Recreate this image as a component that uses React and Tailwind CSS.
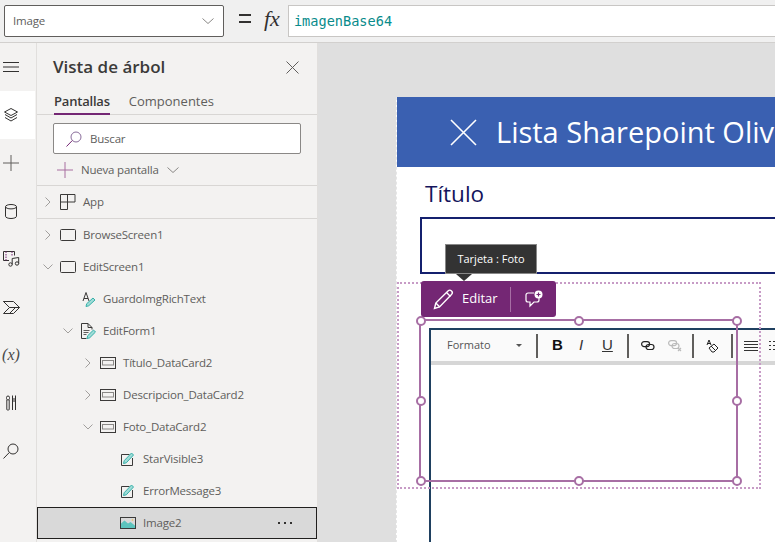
import { useState } from "react";

const ink = "#3b3a39";
const teal = "#35b0a9";

function Chevron({ open }) {
  return (
    <svg width="12" height="12" viewBox="0 0 12 12" fill="none" stroke="#a19f9d" strokeWidth="1">
      {open ? <path d="M1.5 3.5 6 8l4.5-4.5" /> : <path d="M3.5 1.5 8 6l-4.5 4.5" />}
    </svg>
  );
}

function GridIcon() {
  return (
    <svg width="16" height="16" viewBox="0 0 16 16" fill="none" stroke={ink}>
      <path d="M.5.500h14.500v7.500H.5zM7.500.500V15.500M.5 8v7.500h7" />
    </svg>
  );
}

function ScreenIcon() {
  return (
    <svg width="16" height="12" viewBox="0 0 16 12" fill="none" stroke={ink}>
      <rect x=".5" y=".5" width="15" height="11" rx="1" />
    </svg>
  );
}

function CardIcon() {
  return (
    <svg width="16" height="12" viewBox="0 0 16 12" fill="none">
      <rect x=".5" y=".5" width="15" height="11" stroke={ink} />
      <rect x="2.500" y="3.500" width="11" height="4.500" stroke="#8a8886" />
    </svg>
  );
}

function Pencil({ d }) {
  return <path d={d} fill="#9fdcd7" stroke={teal} strokeWidth="1" strokeLinejoin="round" />;
}

function RichTextIcon() {
  return (
    <svg width="16" height="16" viewBox="0 0 16 16" fill="none">
      <path d="M3 10 6 1.500 9 10M4 7.500h4" stroke={ink} />
      <Pencil d="m6 15.500.7-2.800L13 7l2 2-6.300 5.800z" />
    </svg>
  );
}

function FormIcon() {
  return (
    <svg width="16" height="16" viewBox="0 0 16 16" fill="none">
      <path d="M8 .5H1.500v15h5M8 .5l4 4v2M8 .5v4h4" stroke={ink} />
      <path d="M3.500 7.500h6M3.500 9.500h5M3.500 11.500h3" stroke="#605e5c" />
      <Pencil d="m7 15.500.7-2.800L13.500 7l2 2-5.800 5.800z" />
    </svg>
  );
}

function EditBoxIcon() {
  return (
    <svg width="14" height="14" viewBox="0 0 14 14" fill="none">
      <path d="M8.500 2.500H.5v11h11V6" stroke={ink} />
      <Pencil d="m2.500 11.500.7-2.800L10.500 1l2 2L5.300 10.800z" />
    </svg>
  );
}

function PictureIcon() {
  return (
    <svg width="16" height="12" viewBox="0 0 16 12" fill="none">
      <path d="M.500 11.500V7l4-3.500L8 6.500l2.500-1.500 5 4v2.500z" fill="#5cc4bd" />
      <rect x=".5" y=".5" width="15" height="11" stroke={ink} />
      <circle cx="12.500" cy="3" r=".8" fill="#f2c14e" />
    </svg>
  );
}

const rows = [
  { id: "BrowseScreen1", pad: "pl-[5px]", chevron: "closed", icon: <ScreenIcon /> },
  { id: "EditScreen1", pad: "pl-[5px]", chevron: "open", icon: <ScreenIcon /> },
  { id: "GuardoImgRichText", pad: "pl-[25px]", icon: <RichTextIcon /> },
  { id: "EditForm1", pad: "pl-[25px]", chevron: "open", icon: <FormIcon /> },
  { id: "Título_DataCard2", pad: "pl-[45px]", chevron: "closed", icon: <CardIcon /> },
  { id: "Descripcion_DataCard2", pad: "pl-[45px]", chevron: "closed", icon: <CardIcon /> },
  { id: "Foto_DataCard2", pad: "pl-[45px]", chevron: "open", icon: <CardIcon /> },
  { id: "StarVisible3", pad: "pl-[65px]", icon: <EditBoxIcon /> },
  { id: "ErrorMessage3", pad: "pl-[65px]", icon: <EditBoxIcon /> },
];

function TreeRow({ label, pad, chevron, icon, selected }) {
  return (
    <div
      className={`flex h-8 items-center text-[11.500px] tracking-[-0.2px] text-[#605e5c] ${pad} ${
        selected ? "border border-[#201f1e] bg-[#d9d9d9]" : ""
      }`}
    >
      <span className="flex w-3 justify-center">
        {chevron && <Chevron open={chevron === "open"} />}
      </span>
      <span className="ml-[6px] flex w-4 justify-center">{icon}</span>
      <span className="ml-[7px]">{label}</span>
      {selected && (
        <span className="ml-auto mr-[24px] flex gap-[4px]">
          <i className="h-[2px] w-[2px] bg-[#323130]" />
          <i className="h-[2px] w-[2px] bg-[#323130]" />
          <i className="h-[2px] w-[2px] bg-[#323130]" />
        </span>
      )}
    </div>
  );
}

function RailIcon({ children, active }) {
  return (
    <div className={`flex h-12 items-center ${active ? "bg-white" : ""}`}>
      <span className="flex w-[22px] justify-center">{children}</span>
    </div>
  );
}

function Rail() {
  return (
    <div className="w-[37px] shrink-0 border-r border-[#e1dfdd] pr-px">
      <RailIcon>
        <svg width="16" height="10" stroke="#323130"><path d="M0 .5h16M0 5h16M0 9.500h16" /></svg>
      </RailIcon>
      <RailIcon active>
        <svg width="16" height="16" viewBox="0 0 16 16" fill="none" stroke="#323130">
          <path d="M8 1.500 14.500 5 8 8.500 1.500 5z" />
          <path d="M2 7.500 8 11l6-3.500M2 10.500 8 14l6-3.500" />
        </svg>
      </RailIcon>
      <RailIcon>
        <svg width="16" height="16" stroke="#605e5c"><path d="M8 0v16M0 8h16" /></svg>
      </RailIcon>
      <RailIcon>
        <svg width="12" height="15" viewBox="0 0 12 15" fill="none" stroke="#323130">
          <ellipse cx="6" cy="2.700" rx="5.500" ry="2.200" />
          <path d="M.5 2.700v9.600c0 1.200 2.500 2.200 5.500 2.200s5.500-1 5.500-2.200V2.700" />
        </svg>
      </RailIcon>
      <RailIcon>
        <svg width="17" height="16" viewBox="0 0 17 16" fill="none" stroke="#323130">
          <path d="M6 9.500H.5v-9h11v4" />
          <path d="M3 .5v9M9 .5v4" strokeDasharray="1.500 1" stroke="#742774" />
          <circle cx="7.500" cy="13.500" r="1.700" />
          <circle cx="14" cy="12.500" r="1.700" />
          <path d="M9.200 13.500V7.500l6.500-1v6" />
        </svg>
      </RailIcon>
      <RailIcon>
        <svg width="17" height="13" viewBox="0 0 17 13" fill="none" stroke="#323130">
          <path d="M.5.500h10l6 6-6 6H.500l6-6zM.5.500l6 6h10M6.500 12.500l6-6M10.500 12.500" />
          <path d="m9 10 3.500-3.500" />
        </svg>
      </RailIcon>
      <RailIcon>
        <span className="font-['Liberation_Serif',serif] text-[16px] italic text-[#4a4a4a]">(x)</span>
      </RailIcon>
      <RailIcon>
        <svg width="10" height="16" viewBox="0 0 10 16" fill="none" stroke="#323130">
          <rect x=".5" y="1" width="3" height="4" rx="1.500" />
          <path d="M.8 5v9.500c0 .8 2.400.8 2.400 0V5M6.500.5V15M9.500.5V15M6.500 6h3V4h-3z" />
        </svg>
      </RailIcon>
      <RailIcon>
        <svg width="16" height="16" viewBox="0 0 16 16" fill="none" stroke="#323130">
          <circle cx="10" cy="6" r="5" />
          <path d="M6.300 9.500.5 15.500" />
        </svg>
      </RailIcon>
    </div>
  );
}

function TreePanel() {
  const [tab, setTab] = useState("Pantallas");
  return (
    <div className="w-[281px] shrink-0 border-r border-[#e1dfdd] bg-[#f3f2f1]">
      <div className="flex h-[48px] items-center justify-between pl-4 pr-[18px]">
        <span className="text-[17px] font-semibold text-[#3b3a39]">Vista de árbol</span>
        <svg width="13" height="13" stroke="#605e5c"><path d="m.5.500 12 12M12.500.500l-12 12" /></svg>
      </div>
      <div className="flex h-[24px] gap-[19px] border-b border-[#d8d6d4] pl-[17px] text-[13px]">
        {["Pantallas", "Componentes"].map((t) => (
          <button
            key={t}
            onClick={() => setTab(t)}
            className={`-mb-px h-[24px] border-b-2 ${
              tab === t
                ? "border-[#742774] font-semibold tracking-[-0.2px] text-[#3b3a39]"
                : "border-transparent text-[#605e5c]"
            }`}
          >
            {t}
          </button>
        ))}
      </div>
      <div className="mx-4 mt-2 flex h-[31px] w-[248px] items-center rounded-[2px] border border-[#8a8886] bg-white pl-[12px]">
        <svg width="16" height="16" viewBox="0 0 16 16" fill="none" stroke="#742774">
          <circle cx="10" cy="6" r="5" stroke="#8a6d9b" />
          <path d="M6.300 9.500.5 15.500" />
        </svg>
        <span className="ml-[8px] text-[11.500px] tracking-[-0.2px] text-[#605e5c]">Buscar</span>
      </div>
      <div className="flex h-[32px] items-center border-b border-[#d8d6d4] pl-5 text-[11.500px] tracking-[-0.2px] text-[#605e5c]">
        <svg width="16" height="16" stroke="#a86ea0"><path d="M8 0v16M0 8h16" /></svg>
        <span className="ml-2">Nueva pantalla</span>
        <svg className="ml-2" width="12" height="12" viewBox="0 0 12 12" fill="none" stroke="#8a8886">
          <path d="M.5 3.500 6 8.500l5.500-5" />
        </svg>
      </div>
      <div className="border-b border-[#d8d6d4]">
        <TreeRow label="App" pad="pl-[5px]" chevron="closed" icon={<GridIcon />} />
      </div>
      {rows.map((r) => (
        <TreeRow key={r.id} label={r.id} pad={r.pad} chevron={r.chevron} icon={r.icon} />
      ))}
      <TreeRow label="Image2" pad="pl-[64px]" icon={<PictureIcon />} selected />
    </div>
  );
}

function Sep() {
  return <span className="block h-[24px] w-[2px] shrink-0 bg-[#605e5c]" />;
}

function RichToolbar() {
  return (
    <div className="flex h-[31px] items-center bg-[#fafafa] text-[#333]">
      <span className="ml-[16px] w-[60px] text-[11px] text-[#555]">Formato</span>
      <span className="ml-[9px] h-0 w-0 border-x-[3px] border-t-[3px] border-x-transparent border-t-[#555]" />
      <span className="ml-[14px]"><Sep /></span>
      <span className="flex w-[89px] shrink-0 items-center font-['Liberation_Sans',sans-serif] text-[15px]">
        <b className="ml-[14px] w-[17px] text-[#111]">B</b>
        <i className="w-[24px] text-center text-[#333]">I</i>
        <u className="ml-[9px]">U</u>
      </span>
      <Sep />
      <span className="ml-[12px] flex w-[51px] shrink-0 items-center gap-[13px]">
        <svg width="14" height="10" viewBox="0 0 14 10" fill="none" stroke="#222" strokeWidth="1.200">
          <rect x=".6" y=".6" width="8" height="5" rx="2.500" />
          <rect x="5" y="3.500" width="8" height="5" rx="2.500" />
        </svg>
        <svg width="14" height="12" viewBox="0 0 14 12" fill="none" stroke="#bbb" strokeWidth="1.200">
          <rect x=".6" y=".6" width="8" height="5" rx="2.500" />
          <rect x="4" y="3.500" width="7" height="5" rx="2.500" />
          <path d="m10 8 3 3M13 8l-3 3" />
        </svg>
      </span>
      <Sep />
      <span className="flex w-[37px] shrink-0 justify-center">
        <svg width="13" height="14" viewBox="0 0 13 14" fill="none" stroke="#222">
          <path d="M1 6 3 1l2 5M1.500 4.500h3" />
          <path d="m3 9 5-4 4 4-4 4H6z" />
          <path d="m5 7 4 4" />
        </svg>
      </span>
      <Sep />
      <span className="ml-[11px] flex shrink-0 gap-[11px]">
        <svg width="14" height="10" stroke="#333"><path d="M0 .5h14M0 3.500h14M0 6.500h14M0 9.500h14" /></svg>
        <svg width="14" height="10" stroke="#333"><path d="M0 .5h2M4 .5h10M0 4.500h2M4 4.500h10M0 8.500h2M4 8.500h10" /></svg>
      </span>
    </div>
  );
}

// circulito de seleccion, centrado en su posicion
function Handle({ place }) {
  return (
    <span
      className={`absolute h-[10px] w-[10px] rounded-full border-2 border-[#a76ea4] bg-white ${place}`}
    />
  );
}

function Canvas() {
  return (
    <div className="relative min-w-0 flex-1 overflow-hidden bg-[#dfdfdf] pl-[78px] pt-[54px]">
      <div className="h-[446px] w-[500px] overflow-hidden border-l border-dashed border-[#e5e5e5] bg-white">
        <div className="flex h-[70px] items-center whitespace-nowrap bg-[#3a60b1] pl-[53px] font-['Open_Sans',sans-serif] text-[29px] text-white">
          <svg width="27" height="27" stroke="#fff" strokeWidth="1.600"><path d="m1 1 25 25M26 1 1 26" /></svg>
          <span className="ml-[19px]">Lista Sharepoint Olive</span>
        </div>
        <div className="pl-[28px] pt-[9px] text-[22.500px] leading-[36px] text-[#14145c]">Título</div>
        <div className="ml-[23px] mt-[5px] h-[57px] border-2 border-r-0 border-[#14206e] bg-white" />
        <div className="ml-[32px] mt-[54px] h-[230px] border-l-2 border-t-2 border-[#1f4060] p-0">
          <RichToolbar />
          <div className="h-[4px] bg-[#d6d6d6]" />
        </div>
      </div>

      {/* capa de seleccion */}
      <div className="absolute left-[79px] top-[239px] h-[207px] w-[364px] border-2 border-dotted border-[#c79bc6]" />
      <div className="absolute left-[101px] top-[276px] h-[163px] w-[319px] border-2 border-[#a76ea4]">
        <Handle place="-left-[5px] -top-[5px]" />
        <Handle place="left-[153px] -top-[5px]" />
        <Handle place="-right-[6px] -top-[5px]" />
        <Handle place="-left-[5px] top-[75px]" />
        <Handle place="-right-[6px] top-[75px]" />
        <Handle place="-left-[5px] -bottom-[6px]" />
        <Handle place="left-[153px] -bottom-[6px]" />
        <Handle place="-right-[6px] -bottom-[6px]" />
      </div>

      <div className="absolute left-[103px] top-[238px] flex h-[36px] w-[135px] items-center rounded-[3px] bg-[#742774] pl-[12px] text-[13px] text-white">
        <svg width="21" height="21" viewBox="0 0 21 21" fill="none" stroke="#fff" strokeWidth="1.400">
          <path d="m1.500 19.500 1.300-5.500L15 2c1-1 2.500-1 3.500 0s1 2.500 0 3.500L6.500 18z" />
          <path d="m13.500 3.500 4 4M2.800 14l4 4" />
        </svg>
        <span className="ml-[8px] w-[48px]">Editar</span>
        <span className="h-[25px] w-px bg-[#a76ea4]" />
        <svg className="ml-[14px]" width="18" height="18" viewBox="0 0 18 18" fill="none" stroke="#fff" strokeWidth="1.200">
          <path d="M9 3H3a2 2 0 0 0-2 2v5a2 2 0 0 0 2 2h2v4l4-4h3a2 2 0 0 0 2-2V8" />
          <circle cx="13.500" cy="4.500" r="4" fill="#fff" stroke="none" />
          <path d="M13.500 2.500v4M11.500 4.500h4" stroke="#742774" />
        </svg>
      </div>
      <div className="absolute left-[127px] top-[201px] flex h-[30px] w-[92px] items-center justify-center border border-[#888] bg-[#333] text-[11px] text-white">
        Tarjeta : Foto
      </div>
      <div className="absolute left-[138px] top-[231px] h-0 w-0 border-x-[8px] border-t-[7px] border-x-transparent border-t-[#333]" />
    </div>
  );
}

export default function App() {
  return (
    <div className="flex h-[542px] w-[775px] flex-col overflow-hidden bg-[#f3f2f1] font-['Open_Sans',sans-serif]">
      <div className="flex h-[43px] shrink-0 items-start border-b border-[#d2d0ce] bg-[#f0f0f0] pt-[5px]">
        <div className="ml-1 flex h-[32px] w-[220px] items-center justify-between rounded-[2px] border border-[#605e5c] bg-white pl-[8px] pr-[9px] text-[11.500px] tracking-[-0.2px] text-[#605e5c]">
          Image
          <svg width="12" height="12" viewBox="0 0 12 12" fill="none" stroke="#8a8886"><path d="M.5 3.500 6 8.500l5.500-5" /></svg>
        </div>
        <span className="ml-[15px] mt-[7px] flex h-[13px] w-[12px] flex-col justify-center gap-[5px]">
          <i className="h-[2px] bg-[#323130]" />
          <i className="h-[2px] bg-[#323130]" />
        </span>
        <span className="ml-[13px] mt-[1px] font-['Liberation_Serif',serif] text-[22px] italic leading-[26px] text-[#323130]">fx</span>
        <div className="ml-[8px] flex h-[32px] flex-1 items-center border-y border-l border-[#c8c6c4] bg-white pl-[5px] font-['DejaVu_Sans_Mono',monospace] text-[13.600px] text-[#098b8b]">
          imagenBase64
        </div>
      </div>
      <div className="flex min-h-0 flex-1">
        <Rail />
        <TreePanel />
        <Canvas />
      </div>
    </div>
  );
}
